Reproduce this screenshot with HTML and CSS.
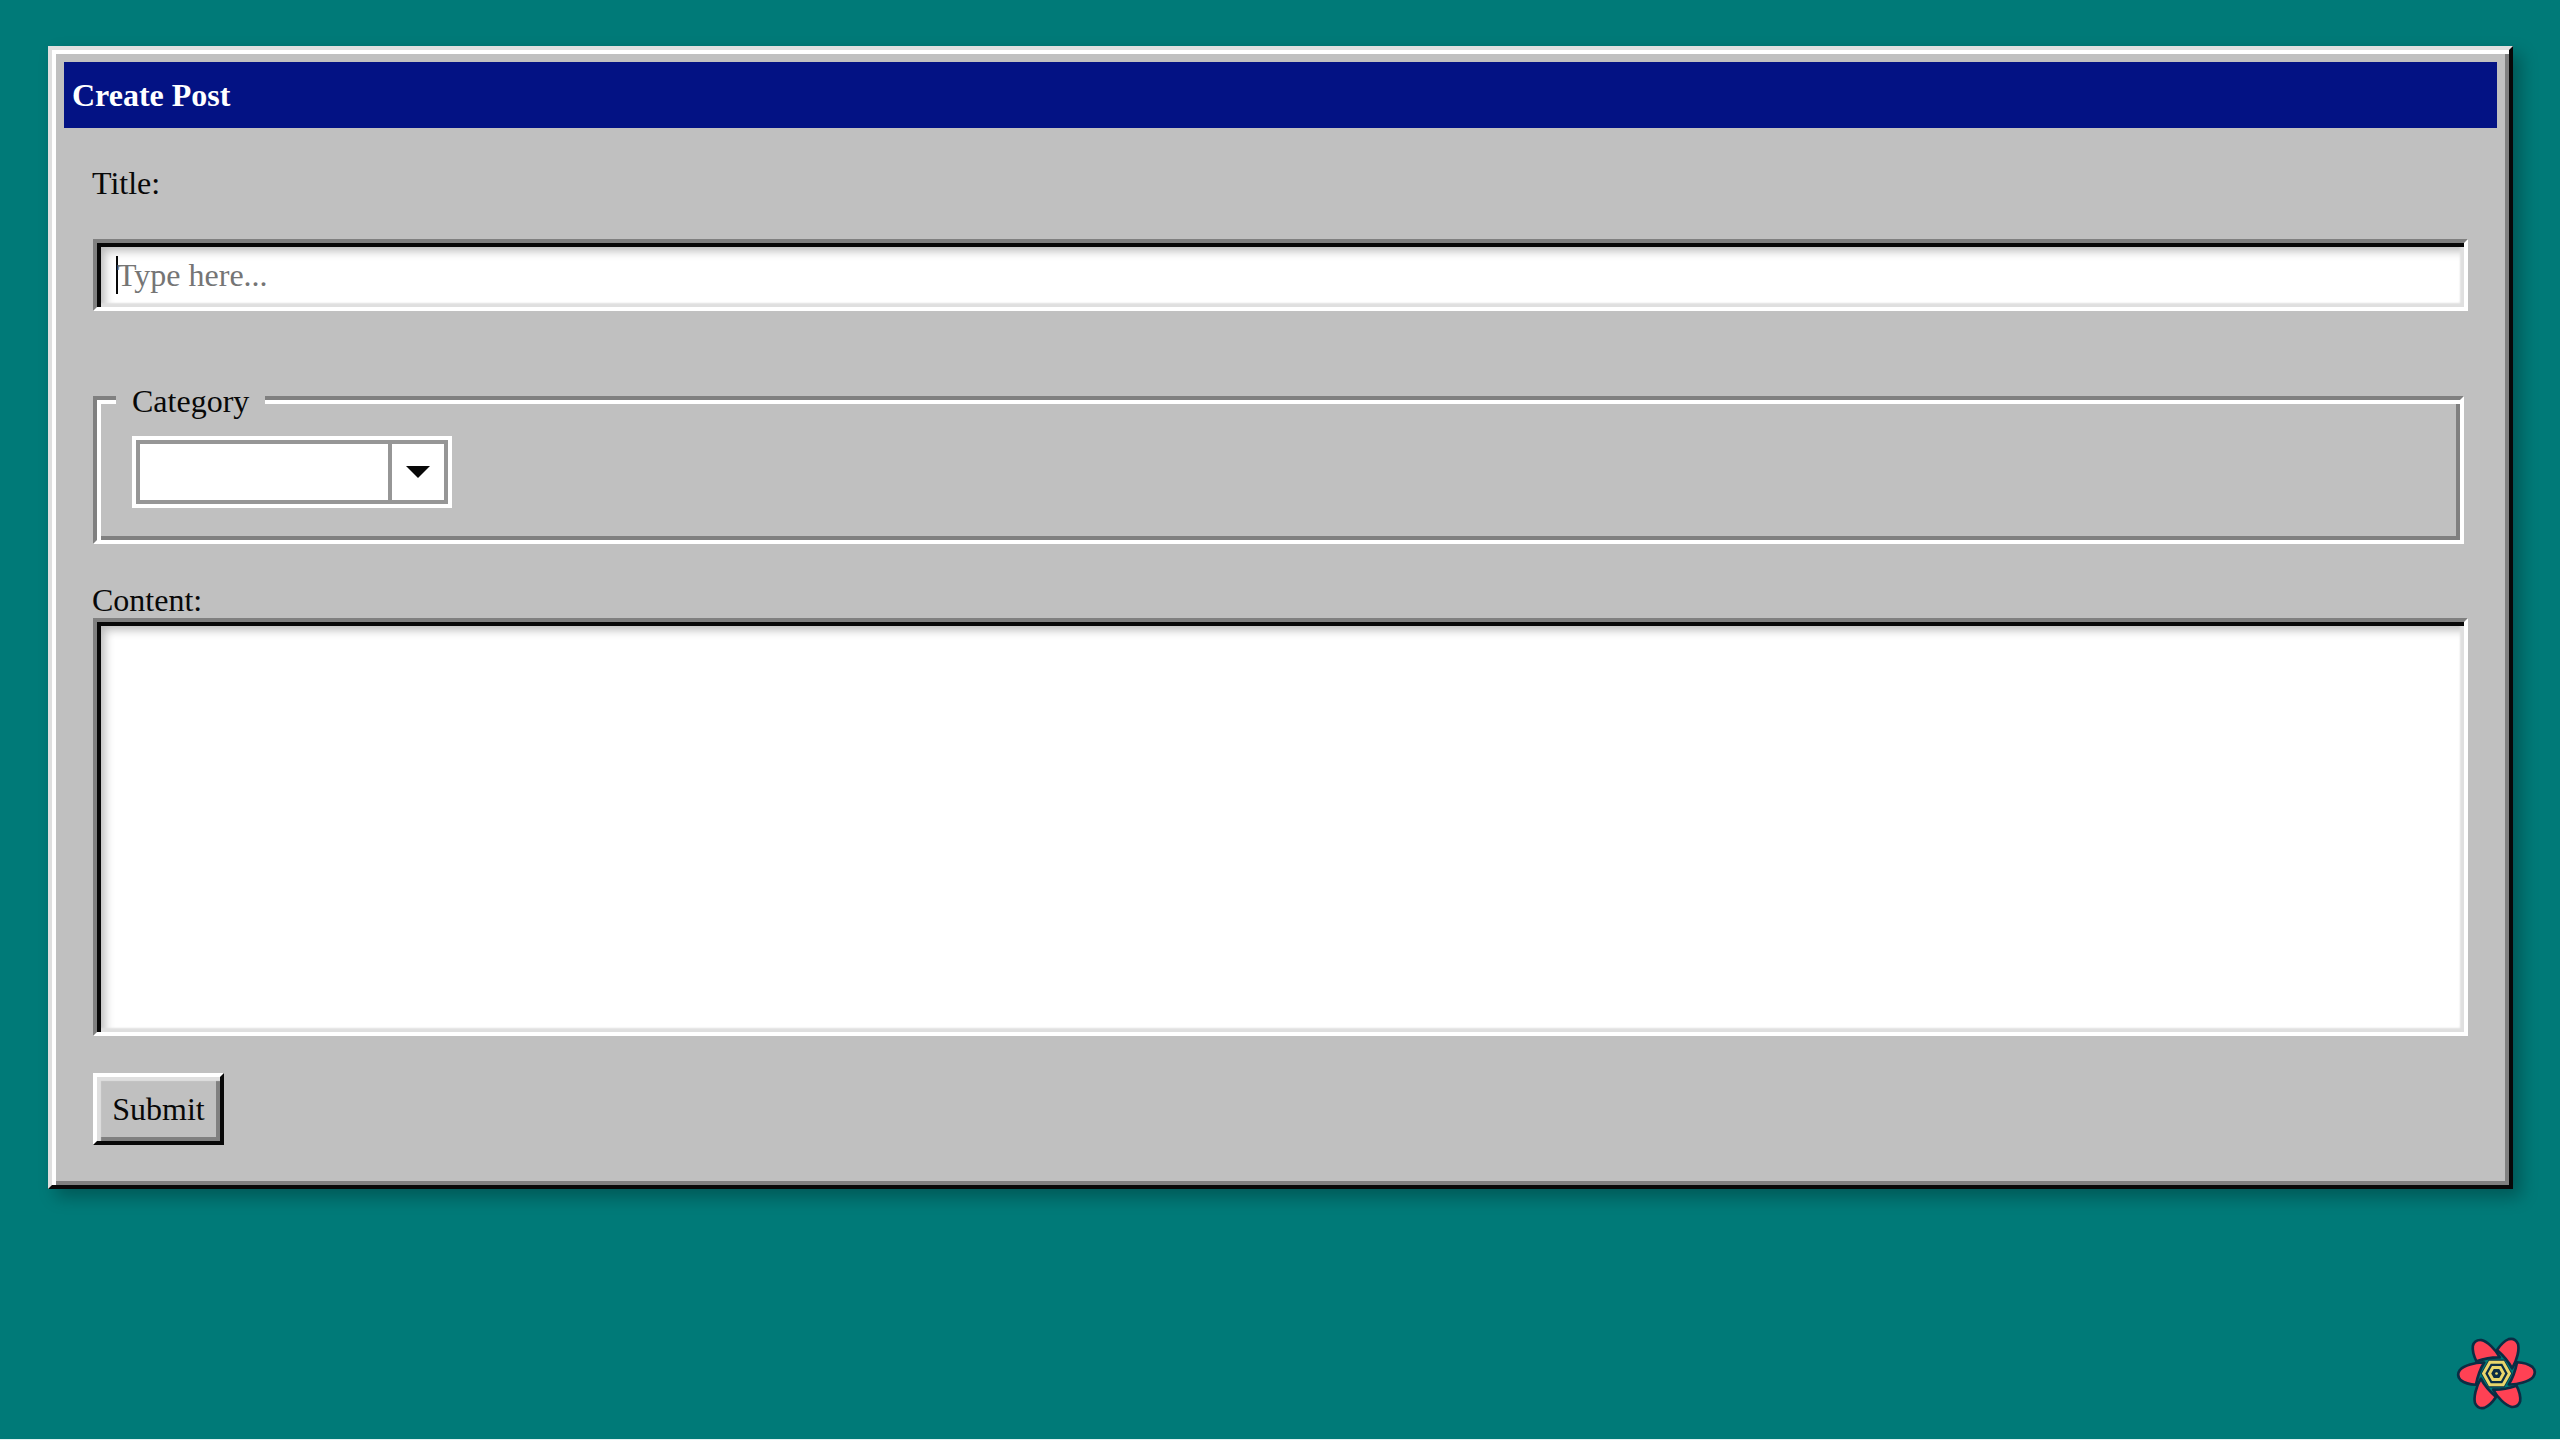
FILE: index.html
```
<!DOCTYPE html>
<html lang="en">
<head>
<meta charset="utf-8">
<title>Create Post</title>
<link rel="stylesheet" href="styles.css">
</head>
<body>
<main class="desktop">
  <section class="window">
    <header class="title-bar">Create Post</header>
    <form class="form">
      <label class="label">Title:</label>
      <div class="field text-field"><span class="caret"></span><span class="placeholder">Type here...</span></div>
      <div class="group">
        <div class="legend">Category</div>
        <div class="select">
          <div class="select-value"></div>
          <div class="select-toggle"><svg width="24" height="12" viewBox="0 0 24 12"><path d="M0 0H24L12 12Z"/></svg></div>
        </div>
      </div>
      <label class="label content-label">Content:</label>
      <div class="field text-area"></div>
      <button class="button" type="button">Submit</button>
    </form>
  </section>
  <svg class="logo" viewBox="48 51 244 220">
    <defs>
      <path id="petal" d="M133 128C105 127 72 137 60 150C53 160 53 172 62 181C74 190 90 194 108 195C113 170 119 150 133 128Z"/>
    </defs>
    <g class="petals">
      <use href="#petal"/>
      <use href="#petal" transform="rotate(60 170 161)"/>
      <use href="#petal" transform="rotate(120 170 161)"/>
      <use href="#petal" transform="rotate(180 170 161)"/>
      <use href="#petal" transform="rotate(240 170 161)"/>
      <use href="#petal" transform="rotate(300 170 161)"/>
    </g>
    <path class="core-back" d="M147 119H193L217 161L193 203H147L123 161Z"/>
    <path class="core-ring" d="M150 127H190L209 161L190 195H150L131 161Z"/>
    <path class="core-ring" d="M159 143H181L191 161L181 179H159L149 161Z"/>
    <circle class="core-dot" cx="170" cy="161" r="4"/>
  </svg>
</main>
</body>
</html>
```
FILE: styles.css
```
* { box-sizing: border-box; }

html { background: #e4f1f1; }

body {
  margin: 0;
  color: #080808;
  font: 32px/36px "Liberation Serif", "Times New Roman", serif;
}

.desktop {
  height: 1439px;
  padding: 46px 47px 0 48px;
  background: #007a78;
  overflow: hidden;
}

.window {
  height: 1143px;
  padding: 12px;
  border: 4px solid;
  border-color: #dfdfdf #080808 #080808 #dfdfdf;
  background: #c0c0c0;
  box-shadow: inset 4px 4px #fff, inset -4px -4px #808080, 8px 8px 16px rgba(0, 0, 0, .28);
}

.title-bar {
  height: 66px;
  padding: 15px 8px;
  background: #031284;
  color: #fff;
  font-weight: bold;
}

.form {
  display: flex;
  flex-direction: column;
  padding: 37px 28px 0;
}

.label { height: 74px; }

.field,
.group,
.button { margin-left: 1px; }

.field {
  border: 4px solid;
  border-color: #808080 #fff #fff #808080;
  background: #fff;
  box-shadow: inset 4px 4px #080808, inset -4px -4px 2px #dfdfdf, inset 8px 8px 10px #bbb;
}

.text-field {
  display: flex;
  align-items: center;
  width: 2375px;
  height: 72px;
  padding-left: 19px;
}

.caret {
  width: 2px;
  height: 38px;
  background: #080808;
}

.placeholder {
  margin-left: -1px;
  color: #757575;
}

.group {
  width: 2371px;
  height: 148px;
  margin-top: 85px;
  margin-bottom: 38px;
  padding: 0 35px;
  border: 4px solid;
  border-color: #808080 #fff #fff #808080;
  box-shadow: inset 4px 4px #fff, inset -4px -4px #808080;
}

.legend {
  width: 149px;
  height: 36px;
  margin: -17px 0 17px -16px;
  padding: 0 16px;
  background: #c0c0c0;
}

.select {
  display: flex;
  width: 320px;
  height: 72px;
  border: 4px solid #fff;
  background: #fff;
}

.select-value {
  flex: 1;
  border: 4px solid #969696;
}

.select-toggle {
  display: flex;
  align-items: center;
  justify-content: center;
  width: 56px;
  border: 4px solid #969696;
  border-left: 0;
}

.select-toggle svg { fill: #080808; }

.content-label { height: 36px; }

.text-area {
  width: 2375px;
  height: 418px;
}

.button {
  width: 131px;
  height: 72px;
  margin-top: 37px;
  padding: 0;
  border: 4px solid;
  border-color: #fff #080808 #080808 #fff;
  background: #c0c0c0;
  box-shadow: inset 4px 4px 1px #dfdfdf, inset -4px -4px #808080;
  color: inherit;
  font: inherit;
}

.logo {
  position: absolute;
  left: 2456px;
  top: 1337px;
  width: 81px;
  height: 73px;
}

.petals {
  fill: #ff4154;
  stroke: #0b2d44;
  stroke-width: 8;
  stroke-linejoin: round;
}

.core-back { fill: #0b2d44; }

.core-ring {
  fill: #0b2d44;
  stroke: #e9d66b;
  stroke-width: 9;
}

.core-dot { fill: #e9d66b; }
```
